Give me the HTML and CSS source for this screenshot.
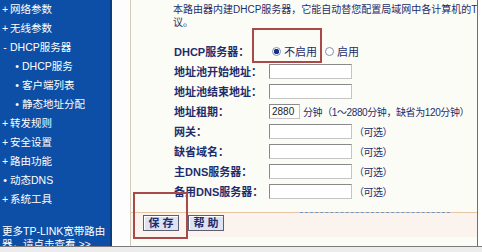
FILE: index.html
```html
<!DOCTYPE html>
<html lang="zh-CN">
<head>
    <meta charset="UTF-8">
    <title>DHCP服务</title>
    <link rel="stylesheet" href="styles.css">
</head>
<body>
    <div class="page">
        <div class="menu">
            <ul class="menu-list">
                <li><span class="mark">+</span>网络参数</li>
                <li><span class="mark">+</span>无线参数</li>
                <li><span class="mark">-</span>DHCP服务器</li>
                <li class="sub"><span class="mark">•</span>DHCP服务</li>
                <li class="sub"><span class="mark">•</span>客户端列表</li>
                <li class="sub"><span class="mark">•</span>静态地址分配</li>
                <li><span class="mark">+</span>转发规则</li>
                <li><span class="mark">+</span>安全设置</li>
                <li><span class="mark">+</span>路由功能</li>
                <li><span class="mark">•</span>动态DNS</li>
                <li><span class="mark">+</span>系统工具</li>
            </ul>
            <div class="more">更多TP-LINK宽带路由<br>器，请点击查看 &gt;&gt;</div>
        </div>
        <div class="gutter"></div>
        <div class="panel">
            <div class="intro">
                <div class="line">本路由器内建DHCP服务器，它能自动替您配置局域网中各计算机的TCP/IP协</div>
                <div class="line">议。</div>
            </div>
            <div class="form">
                <div class="row">
                    <span class="label">DHCP服务器：</span>
                    <span class="radio on"></span><span class="opt">不启用</span>
                    <span class="radio"></span><span class="opt">启用</span>
                </div>
                <div class="row"><span class="label">地址池开始地址：</span><input class="field" type="text"></div>
                <div class="row"><span class="label">地址池结束地址：</span><input class="field" type="text"></div>
                <div class="row">
                    <span class="label">地址租期：</span><input class="field short" type="text" value="2880">
                    <span class="note">分钟（1～2880分钟，缺省为120分钟）</span>
                </div>
                <div class="row"><span class="label">网关：</span><input class="field" type="text"><span class="hint">（可选）</span></div>
                <div class="row"><span class="label">缺省域名：</span><input class="field" type="text"><span class="hint">（可选）</span></div>
                <div class="row"><span class="label">主DNS服务器：</span><input class="field" type="text"><span class="hint">（可选）</span></div>
                <div class="row"><span class="label">备用DNS服务器：</span><input class="field" type="text"><span class="hint">（可选）</span></div>
            </div>
            <div class="sep"><div class="sep-dash"></div></div>
            <div class="actions">
                <button class="btn">保 存</button>
                <button class="btn">帮 助</button>
            </div>
            <div class="mark-box box-dhcp"></div>
            <div class="mark-box box-save"></div>
        </div>
        <div class="edge"></div>
    </div>
</body>
</html>
```

FILE: styles.css
```css
body {
    margin: 0;
    background: #ececec;
    font-family: "Liberation Sans", "Noto Sans CJK SC", sans-serif;
    font-size: 10.5px;
    color: #1e2d6c;
}
.page {
    display: flex;
    width: 482px;
    height: 246px;
    background: #fff;
    border-bottom: 1px solid #7b7b7b;
    overflow: hidden;
}
.menu {
    width: 110px;
    flex: none;
    background: #0d4fa6;
    border-right: 2px solid #093c82;
    color: #fff;
}
.menu-list {
    list-style: none;
    margin: 0;
    padding: 0;
}
.menu-list li {
    height: 19px;
    line-height: 19px;
    white-space: nowrap;
}
.menu-list .mark {
    display: inline-block;
    width: 10px;
    text-align: center;
}
.menu-list .sub {
    padding-left: 12px;
}
.more {
    margin-top: 16px;
    padding-left: 2px;
    line-height: 13px;
}
.gutter {
    width: 18px;
    flex: none;
    background: #fdfdfd;
}
.panel {
    position: relative;
    width: 346px;
    flex: none;
    display: flex;
    flex-direction: column;
    background: #fcfcf6;
    border-left: 1px solid #d6ccb6;
    border-right: 1px solid #6f6f6f;
}
.edge {
    flex: 1;
    background: #fff;
}
.intro {
    padding: 3px 0 0 42px;
    font-size: 10px;
    line-height: 13px;
    white-space: nowrap;
    overflow: hidden;
}
.form {
    margin-top: 12px;
    padding-left: 43px;
}
.row {
    display: flex;
    align-items: center;
    height: 20px;
    white-space: nowrap;
}
.label {
    width: 95px;
    flex: none;
    font-size: 11px;
    font-weight: bold;
}
.field {
    width: 83px;
    height: 15px;
    box-sizing: border-box;
    margin: 0;
    padding: 0 2px;
    border: 1px solid;
    border-color: #8a8a8a #c4c4c4 #c4c4c4 #8a8a8a;
    background: #fff;
    font: 10px "Liberation Sans", sans-serif;
    color: #222;
}
.field.short {
    width: 31px;
}
.note {
    margin-left: 3px;
    font-size: 10px;
    letter-spacing: -0.4px;
}
.hint {
    margin-left: 2px;
    font-size: 10px;
    letter-spacing: -0.5px;
}
.radio {
    width: 9px;
    height: 9px;
    margin: 0 3px;
    border: 1px solid #8090b0;
    border-radius: 50%;
    background: #fff;
    box-sizing: border-box;
}
.radio.on {
    background: radial-gradient(circle, #1b2f86 0 2.5px, #fff 3px);
}
.opt {
    font-size: 11px;
    margin-right: 5px;
}
.sep {
    margin-top: 11px;
    border-top: 1px solid #e6c6a4;
}
.sep-dash {
    margin: -1px 0 0 169px;
    width: 150px;
    border-top: 1px dashed #6f96c8;
}
.actions {
    display: flex;
    gap: 9px;
    padding: 2px 0 0 12px;
    height: 22px;
    background: #fbf4ee;
}
.btn {
    width: 36px;
    height: 16px;
    padding: 0;
    border: 1px solid #5e5e6e;
    background: #dde3f3;
    box-shadow: inset 1px 1px 0 #fff;
    font: bold 11px "Liberation Sans", "Noto Sans CJK SC", sans-serif;
    color: #1e2d6c;
    line-height: 14px;
}
.mark-box {
    position: absolute;
    border: 2px solid #a84a4a;
    box-sizing: border-box;
}
.box-dhcp {
    left: 121px;
    top: 28px;
    width: 70px;
    height: 35px;
}
.box-save {
    left: 2px;
    top: 192px;
    width: 55px;
    height: 47px;
}
```
